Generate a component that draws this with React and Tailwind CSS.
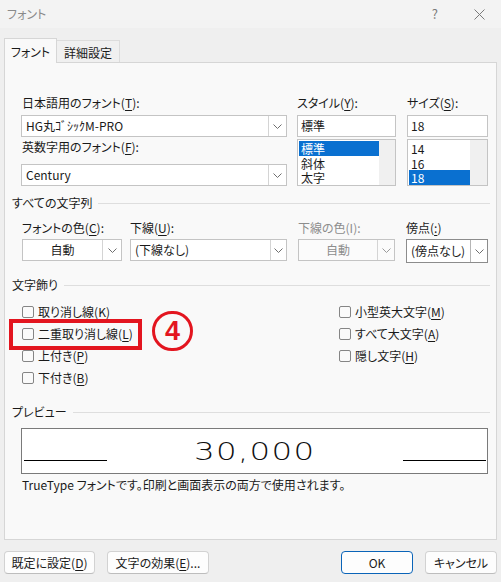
import React from "react";

const Chevron = ({ color = "#6e6e6e" }) => (
  <svg width="9" height="5" viewBox="0 0 9 5" fill="none">
    <path d="M0.5 0.5 L4.5 4.5 L8.5 0.5" stroke={color} strokeWidth="1" />
  </svg>
);

function Combo({ className = "", arrowClass = "w-[18px]", children, center, disabled, dark }) {
  return (
    <div
      className={`flex h-[22px] border ${dark ? "border-[#8c8c8c]" : "border-[#c4c4c4]"} ${disabled ? "bg-[#fbfbfb]" : "bg-white"} ${className}`}
    >
      <div
        className={`flex-1 flex items-center ${center ? "justify-center" : "pl-[4px]"} ${disabled ? "text-[#8d8d8d]" : "text-[#1a1a1a]"} text-[12px]`}
      >
        {children}
      </div>
      <div className={`${arrowClass} border-l ${dark ? "border-[#b5b5b5]" : "border-[#d4d4d4]"} flex items-center justify-center`}>
        <Chevron color={disabled ? "#9a9a9a" : "#6e6e6e"} />
      </div>
    </div>
  );
}

const U = ({ children }) => <span className="underline underline-offset-2 decoration-1">{children}</span>;

function Heading({ children }) {
  return (
    <div className="flex items-center h-[16px] ml-[7px] mr-[6px]">
      <span className="text-[12px] text-[#1a1a1a] leading-[16px]">{children}</span>
      <div className="flex-1 h-px bg-[#dedede] ml-[6px]" />
    </div>
  );
}

function Check({ children }) {
  return (
    <div className="flex items-center h-[22px] gap-[4px]">
      <div className="w-[12px] h-[12px] border border-[#858585] rounded-[2px] bg-[#fafafa]" />
      <span className="text-[12px] text-[#1a1a1a] leading-[16px]">{children}</span>
    </div>
  );
}

function Item({ children, selected }) {
  return (
    <div className={`h-[15px] pl-[2px] flex items-center ${selected ? "bg-[#0a70d0] text-white" : ""}`}>
      <span className="inline-block leading-[13px] h-[13px] overflow-visible">{children}</span>
    </div>
  );
}

function Btn({ className = "", children, primary }) {
  return (
    <div
      className={`h-[23px] flex items-center justify-center rounded-[4px] border ${primary ? "border-[#0a64b8]" : "border-[#d2d2d2] border-b-[#bdbdbd]"} bg-[#fdfdfd] text-[12px] text-[#1a1a1a] ${className}`}
    >
      {children}
    </div>
  );
}

export default function App() {
  return (
    <div
      className="relative w-[501px] h-[582px] bg-[#efefef] overflow-hidden text-[12px] text-[#1a1a1a]"
      style={{ fontFamily: '"Noto Sans CJK JP", "Noto Sans", sans-serif', fontFeatureSettings: '"palt"' }}
    >
      {/* title bar */}
      <div className="h-[28px] bg-[#f3f3f3] flex items-center pl-[7px] pr-[16px]">
        <span className="text-[12px] text-[#8a8a8a]">フォント</span>
        <div className="flex-1" />
        <span className="text-[13px] text-[#7a7a7a] mr-[36px]">?</span>
        <svg width="11" height="11" viewBox="0 0 11 11">
          <path d="M0.5 0.5 L10.5 10.5 M10.5 0.5 L0.5 10.5" stroke="#7a7a7a" strokeWidth="1" />
        </svg>
      </div>

      {/* tabs */}
      <div className="flex items-end h-[24px] mt-[10px] pl-[4px]">
        <div className="relative z-10 -mb-px w-[53px] h-[25px] bg-[#f9f9f9] border-l border-t border-r border-[#d6d6d6] flex items-center justify-center pt-[2px]">
          フォント
        </div>
        <div className="w-[63px] h-[22px] bg-[#f0f0f0] border-t border-r border-[#dcdcdc] flex items-center justify-center pt-[2px]">
          詳細設定
        </div>
      </div>

      {/* panel */}
      <div className="mx-[4px] h-[478px] bg-[#f9f9f9] border border-[#d6d6d6] flex flex-col">
        {/* top block */}
        <div className="flex mt-[32px] ml-[16px]">
          <div className="w-[266px] flex flex-col">
            <div className="h-[16px] leading-[16px] ml-[1px]">日本語用のフォント(<U>T</U>):</div>
            <Combo className="w-[266px] mt-[4px]">HG丸ｺﾞｼｯｸM-PRO</Combo>
            <div className="h-[16px] leading-[16px] ml-[1px] mt-[2px]">英数字用のフォント(<U>F</U>):</div>
            <Combo className="w-[266px] mt-[9px]">Century</Combo>
          </div>
          <div className="w-[99px] ml-[10px] flex flex-col">
            <div className="h-[16px] leading-[16px]">スタイル(<U>Y</U>):</div>
            <div className="h-[22px] mt-[4px] border border-[#c4c4c4] bg-white flex items-center pl-[3px]">標準</div>
            <div className="h-[47px] mt-[2px] border border-[#c4c4c4] bg-white flex">
              <div className="flex-1 flex flex-col pt-px pl-px">
                <Item selected>標準</Item>
                <Item>斜体</Item>
                <Item>太字</Item>
              </div>
              <div className="w-[16px] bg-[#f0f0f0]" />
            </div>
          </div>
          <div className="w-[81px] ml-[11px] flex flex-col">
            <div className="h-[16px] leading-[16px]">サイズ(<U>S</U>):</div>
            <div className="h-[22px] mt-[4px] border border-[#c4c4c4] bg-white flex items-center pl-[3px]">18</div>
            <div className="h-[47px] mt-[2px] border border-[#c4c4c4] bg-white flex">
              <div className="flex-1 flex flex-col pt-px pl-px">
                <Item>14</Item>
                <Item>16</Item>
                <Item selected>18</Item>
              </div>
              <div className="w-[17px] bg-[#f0f0f0]" />
            </div>
          </div>
        </div>

        {/* all text */}
        <div className="mt-[9px]">
          <Heading>すべての文字列</Heading>
        </div>
        <div className="flex mt-[9px] ml-[17px]">
          <div className="w-[100px] flex flex-col">
            <div className="h-[16px] leading-[16px]">フォントの色(<U>C</U>):</div>
            <Combo className="w-[100px] mt-[3px]" arrowClass="w-[19px]" center>自動</Combo>
          </div>
          <div className="w-[157px] ml-[8px] flex flex-col">
            <div className="h-[16px] leading-[16px]">下線(<U>U</U>):</div>
            <Combo className="w-[157px] mt-[3px]" arrowClass="w-[16px]">(下線なし)</Combo>
          </div>
          <div className="w-[97px] ml-[11px] flex flex-col">
            <div className="h-[16px] leading-[16px] text-[#8d8d8d]">下線の色(I):</div>
            <Combo className="w-[97px] mt-[3px]" arrowClass="w-[17px]" center disabled>自動</Combo>
          </div>
          <div className="w-[82px] ml-[11px] flex flex-col">
            <div className="h-[16px] leading-[16px]">傍点(<U>:</U>)</div>
            <Combo className="w-[82px] mt-[3px] h-[24px]" arrowClass="w-[17px]" dark>(傍点なし)</Combo>
          </div>
        </div>

        {/* effects */}
        <div className="mt-[14px]">
          <Heading>文字飾り</Heading>
        </div>
        <div className="flex mt-[8px] ml-[17px]">
          <div className="w-[317px] flex flex-col">
            <Check>取り消し線(<U>K</U>)</Check>
            <Check>二重取り消し線(<U>L</U>)</Check>
            <Check>上付き(<U>P</U>)</Check>
            <Check>下付き(<U>B</U>)</Check>
          </div>
          <div className="flex flex-col">
            <Check>小型英大文字(<U>M</U>)</Check>
            <Check>すべて大文字(<U>A</U>)</Check>
            <Check>隠し文字(<U>H</U>)</Check>
          </div>
        </div>

        {/* preview */}
        <div className="mt-[15px]">
          <Heading>プレビュー</Heading>
        </div>
        <div className="mt-[8px] ml-[16px] w-[467px] h-[46px] border border-[#7a7a7a] bg-white flex items-start">
          <div className="w-[83px] h-px bg-black mt-[31px] ml-[2px]" />
          <div className="flex-1 flex justify-center mt-[10px]">
            <span
              className="inline-block text-[25px] leading-[25px] tracking-[1px] scale-x-[1.3] text-[#111] font-light"
              style={{ fontFamily: '"DejaVu Sans", sans-serif' }}
            >
              30,000
            </span>
          </div>
          <div className="w-[83px] h-px bg-black mt-[31px] mr-px" />
        </div>
        <div className="mt-[3px] ml-[17px] h-[16px] leading-[16px]">
          TrueType フォントです。印刷と画面表示の両方で使用されます。
        </div>
      </div>

      {/* buttons */}
      <div className="flex mt-[11px] px-[4px]">
        <Btn className="w-[91px]">既定に設定(<U>D</U>)</Btn>
        <Btn className="w-[102px] ml-[12px]">文字の効果(<U>E</U>)...</Btn>
        <div className="flex-1" />
        <Btn className="w-[72px]" primary>OK</Btn>
        <Btn className="w-[72px] ml-[12px]">キャンセル</Btn>
      </div>

      {/* annotation overlays */}
      <div className="absolute left-[9px] top-[319px] w-[133px] h-[31px] border-[4px] border-[#e3151f]" />
      <div className="absolute left-[152px] top-[311px] w-[41px] h-[40px] rounded-full border-[3px] border-[#e3151f] flex items-center justify-center text-[#e3151f] text-[27px] font-bold leading-none"
        style={{ fontFamily: '"Liberation Sans", sans-serif' }}>
        4
      </div>
    </div>
  );
}
